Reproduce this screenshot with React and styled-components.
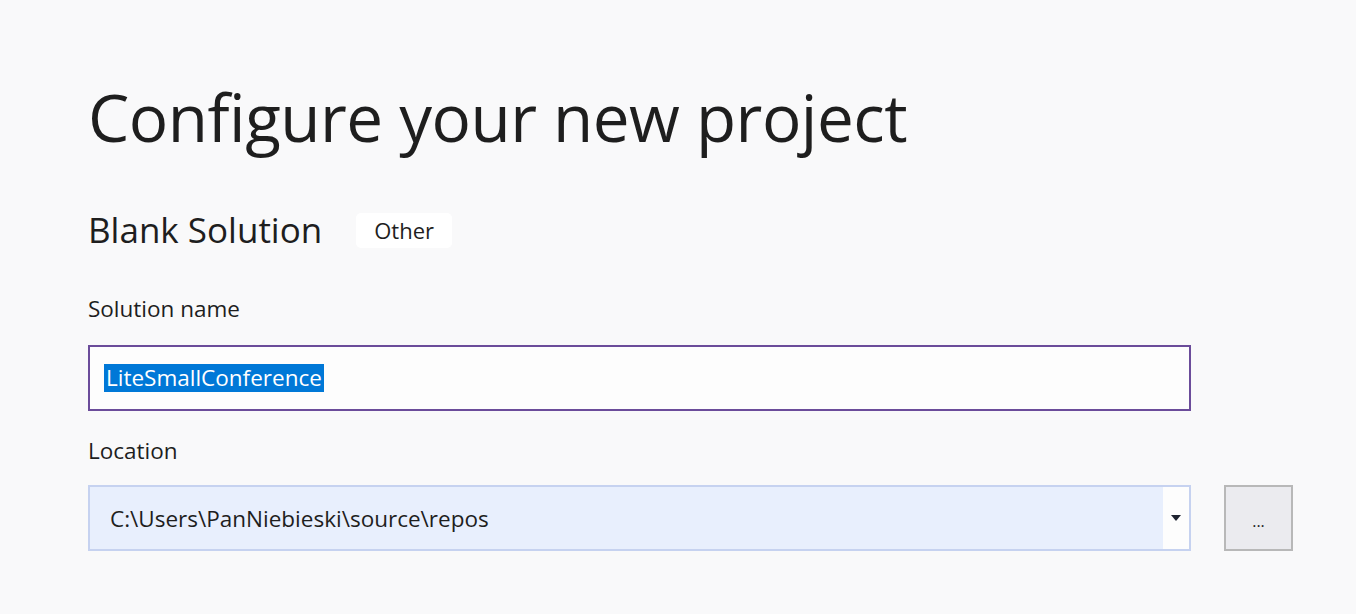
import styled, { createGlobalStyle } from 'styled-components';

const GlobalStyle = createGlobalStyle`
  html, body {
    margin: 0;
    padding: 0;
    background: #f9f9fa;
    font-family: "Open Sans", "Noto Sans", sans-serif;
    color: #1e1e1e;
  }
`;

const Page = styled.div`
  width: 1356px;
  height: 614px;
  box-sizing: border-box;
  padding: 75px 0 0 88px;
  overflow: hidden;
`;

const Title = styled.h1`
  margin: 0;
  font-size: 65.6px;
  font-weight: 400;
  line-height: 84px;
  letter-spacing: -0.5px;
`;

const TemplateRow = styled.div`
  display: flex;
  align-items: center;
  gap: 34px;
  margin-top: 49px;
`;

const TemplateName = styled.h2`
  margin: 0;
  font-size: 35px;
  font-weight: 400;
  line-height: 44px;
`;

const Tag = styled.span`
  background: #ffffff;
  border-radius: 5px;
  padding: 3px 18px 4px;
  font-size: 22px;
  line-height: 28px;
`;

const Label = styled.label`
  display: block;
  font-size: 22.5px;
  line-height: 30px;
  margin-top: ${(p) => p.$top}px;
  margin-bottom: ${(p) => p.$bottom}px;
`;

const FieldRow = styled.div`
  display: flex;
  gap: 33px;
`;

const TextBox = styled.div`
  width: 1103px;
  height: 66px;
  box-sizing: border-box;
  border: 2px solid #6b4c9a;
  background: #fdfdfd;
  display: flex;
  align-items: center;
  padding-left: 14px;
`;

const Selected = styled.span`
  background: #0078d7;
  color: #ffffff;
  font-size: 22.5px;
  line-height: 28px;
  padding: 0 2px;
`;

const Combo = styled.div`
  width: 1103px;
  height: 66px;
  box-sizing: border-box;
  border: 2px solid #c6d2f0;
  background: #e8effd;
  display: flex;
`;

const ComboText = styled.div`
  flex: 1;
  display: flex;
  align-items: center;
  padding-left: 20px;
  font-size: 22.5px;
`;

const ComboArrow = styled.div`
  width: 26px;
  background: #fdfdfd;
  display: flex;
  align-items: center;
  justify-content: center;
`;

const BrowseButton = styled.button`
  width: 69px;
  height: 66px;
  box-sizing: border-box;
  border: 2px solid #b8b8b8;
  background: #ebebef;
  font-family: inherit;
  font-size: 16px;
  color: #1e1e1e;
  padding: 6px 0 0;
`;

export default function App() {
  return (
    <Page>
      <GlobalStyle />
      <Title>Configure your new project</Title>
      <TemplateRow>
        <TemplateName>Blank Solution</TemplateName>
        <Tag>Other</Tag>
      </TemplateRow>
      <Label $top={42} $bottom={21}>Solution name</Label>
      <TextBox>
        <Selected>LiteSmallConference</Selected>
      </TextBox>
      <Label $top={25} $bottom={19}>Location</Label>
      <FieldRow>
        <Combo>
          <ComboText>C:\Users\PanNiebieski\source\repos</ComboText>
          <ComboArrow>
            <svg width="10" height="6" viewBox="0 0 10 6">
              <path d="M0 0 L10 0 L5 6 Z" fill="#1e2330" />
            </svg>
          </ComboArrow>
        </Combo>
        <BrowseButton>...</BrowseButton>
      </FieldRow>
    </Page>
  );
}
